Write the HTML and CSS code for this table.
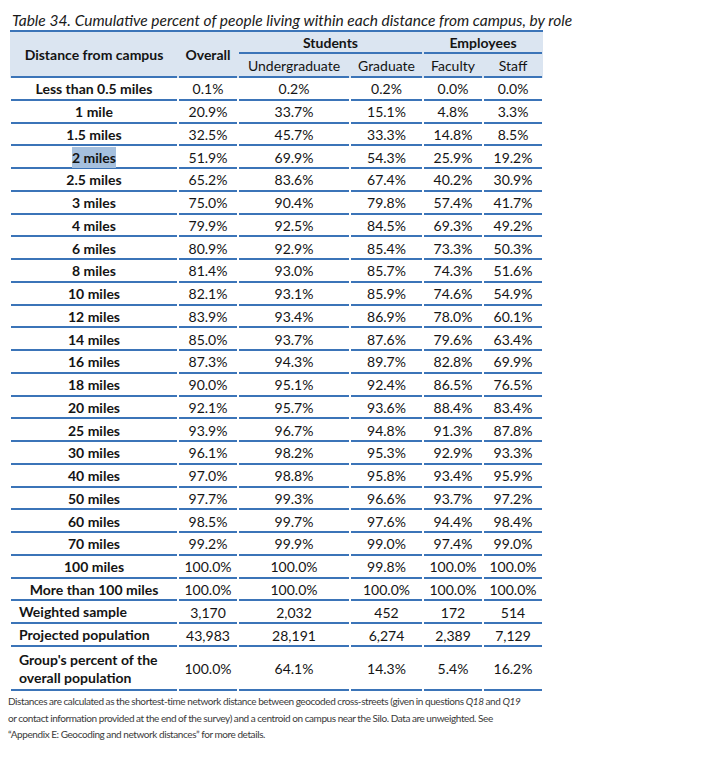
FILE: index.html
```html
<!DOCTYPE html>
<html>
<head>
<meta charset="utf-8">
<link rel="stylesheet" href="styles.css">
</head>
<body>
<p class="caption">Table 34. Cumulative percent of people living within each distance from campus, by role</p>
<table class="tbl">
  <colgroup>
    <col class="c-dist"><col class="c-over"><col class="c-ug"><col class="c-gr"><col class="c-fa"><col class="c-st">
  </colgroup>
  <thead>
    <tr class="h1">
      <th rowspan="2" class="line">Distance from campus</th>
      <th rowspan="2" class="line">Overall</th>
      <th colspan="2" class="line grp">Students</th>
      <th colspan="2" class="line grp">Employees</th>
    </tr>
    <tr class="h2">
      <th class="line sub">Undergraduate</th>
      <th class="line sub">Graduate</th>
      <th class="line sub">Faculty</th>
      <th class="line sub">Staff</th>
    </tr>
  </thead>
  <tbody>
    <tr><th>Less than 0.5 miles</th><td>0.1%</td><td>0.2%</td><td>0.2%</td><td>0.0%</td><td>0.0%</td></tr>
    <tr><th>1 mile</th><td>20.9%</td><td>33.7%</td><td>15.1%</td><td>4.8%</td><td>3.3%</td></tr>
    <tr><th>1.5 miles</th><td>32.5%</td><td>45.7%</td><td>33.3%</td><td>14.8%</td><td>8.5%</td></tr>
    <tr><th><span class="hl">2 miles</span></th><td>51.9%</td><td>69.9%</td><td>54.3%</td><td>25.9%</td><td>19.2%</td></tr>
    <tr><th>2.5 miles</th><td>65.2%</td><td>83.6%</td><td>67.4%</td><td>40.2%</td><td>30.9%</td></tr>
    <tr><th>3 miles</th><td>75.0%</td><td>90.4%</td><td>79.8%</td><td>57.4%</td><td>41.7%</td></tr>
    <tr><th>4 miles</th><td>79.9%</td><td>92.5%</td><td>84.5%</td><td>69.3%</td><td>49.2%</td></tr>
    <tr><th>6 miles</th><td>80.9%</td><td>92.9%</td><td>85.4%</td><td>73.3%</td><td>50.3%</td></tr>
    <tr><th>8 miles</th><td>81.4%</td><td>93.0%</td><td>85.7%</td><td>74.3%</td><td>51.6%</td></tr>
    <tr><th>10 miles</th><td>82.1%</td><td>93.1%</td><td>85.9%</td><td>74.6%</td><td>54.9%</td></tr>
    <tr><th>12 miles</th><td>83.9%</td><td>93.4%</td><td>86.9%</td><td>78.0%</td><td>60.1%</td></tr>
    <tr><th>14 miles</th><td>85.0%</td><td>93.7%</td><td>87.6%</td><td>79.6%</td><td>63.4%</td></tr>
    <tr><th>16 miles</th><td>87.3%</td><td>94.3%</td><td>89.7%</td><td>82.8%</td><td>69.9%</td></tr>
    <tr><th>18 miles</th><td>90.0%</td><td>95.1%</td><td>92.4%</td><td>86.5%</td><td>76.5%</td></tr>
    <tr><th>20 miles</th><td>92.1%</td><td>95.7%</td><td>93.6%</td><td>88.4%</td><td>83.4%</td></tr>
    <tr><th>25 miles</th><td>93.9%</td><td>96.7%</td><td>94.8%</td><td>91.3%</td><td>87.8%</td></tr>
    <tr><th>30 miles</th><td>96.1%</td><td>98.2%</td><td>95.3%</td><td>92.9%</td><td>93.3%</td></tr>
    <tr><th>40 miles</th><td>97.0%</td><td>98.8%</td><td>95.8%</td><td>93.4%</td><td>95.9%</td></tr>
    <tr><th>50 miles</th><td>97.7%</td><td>99.3%</td><td>96.6%</td><td>93.7%</td><td>97.2%</td></tr>
    <tr><th>60 miles</th><td>98.5%</td><td>99.7%</td><td>97.6%</td><td>94.4%</td><td>98.4%</td></tr>
    <tr><th>70 miles</th><td>99.2%</td><td>99.9%</td><td>99.0%</td><td>97.4%</td><td>99.0%</td></tr>
    <tr><th>100 miles</th><td>100.0%</td><td>100.0%</td><td>99.8%</td><td>100.0%</td><td>100.0%</td></tr>
    <tr><th>More than 100 miles</th><td>100.0%</td><td>100.0%</td><td>100.0%</td><td>100.0%</td><td>100.0%</td></tr>
    <tr class="sum"><th class="left">Weighted sample</th><td>3,170</td><td>2,032</td><td>452</td><td>172</td><td>514</td></tr>
    <tr class="sum"><th class="left">Projected population</th><td>43,983</td><td>28,191</td><td>6,274</td><td>2,389</td><td>7,129</td></tr>
    <tr class="sum tall"><th class="left">Group's percent of the overall population</th><td>100.0%</td><td>64.1%</td><td>14.3%</td><td>5.4%</td><td>16.2%</td></tr>
  </tbody>
</table>
<p class="note">Distances are calculated as the shortest-time network distance between geocoded cross-streets (given in questions <i>Q18</i> and <i>Q19</i><br>or contact information provided at the end of the survey) and a centroid on campus near the Silo. Data are unweighted. See<br>“Appendix E: Geocoding and network distances” for more details.</p>
</body>
</html>
```

FILE: styles.css
```css
html, body {
  margin: 0;
  padding: 0;
  background: #ffffff;
}

body {
  font-family: Lato, "Liberation Sans", sans-serif;
  color: #141414;
}

.caption {
  margin: 11px 0 0 12px;
  font-style: italic;
  font-size: 15.5px;
  line-height: 19px;
  color: #1a1a1a;
  white-space: nowrap;
}

.tbl {
  margin-left: 10px;
  border-collapse: collapse;
  border-spacing: 0;
  table-layout: fixed;
  width: 533px;
  border-top: 2px solid #3b74b8;
  font-size: 14px;
}

.c-dist { width: 168px; }
.c-over { width: 60px; }
.c-ug { width: 112px; }
.c-gr { width: 73px; }
.c-fa { width: 60px; }
.c-st { width: 60px; }

.tbl th,
.tbl td {
  padding: 0;
  text-align: center;
  vertical-align: middle;
  background-image: linear-gradient(#3b74b8, #3b74b8);
  background-repeat: no-repeat;
  background-position: center bottom;
  background-size: calc(100% - 2px) 2px;
  line-height: 17px;
  white-space: nowrap;
}

.tbl thead th {
  background-color: #dbe5f1;
}

.tbl thead .h1 th.grp {
  height: 20px;
}

.tbl thead .h2 th {
  height: 22px;
  font-weight: normal;
}

.tbl thead th.line {
  padding-bottom: 2px;
}

.tbl tbody th {
  font-weight: bold;
}

.tbl tbody tr {
  height: 22.75px;
}

.tbl tbody th,
.tbl tbody td {
  padding-bottom: 1px;
}

.tbl tbody tr.sum {
  height: 23px;
}

.tbl tbody tr.tall {
  height: 44px;
}

.tbl tbody th.left {
  text-align: left;
  padding-left: 9px;
  line-height: 18px;
  white-space: normal;
}

.hl {
  background: #a5c0de;
  padding: 2px 0;
}

.note {
  margin: 2px 0 0 8px;
  font-size: 10px;
  line-height: 16.5px;
  letter-spacing: -0.4px;
  word-spacing: -0.2px;
  color: #3a3a3a;
  white-space: nowrap;
}
```
